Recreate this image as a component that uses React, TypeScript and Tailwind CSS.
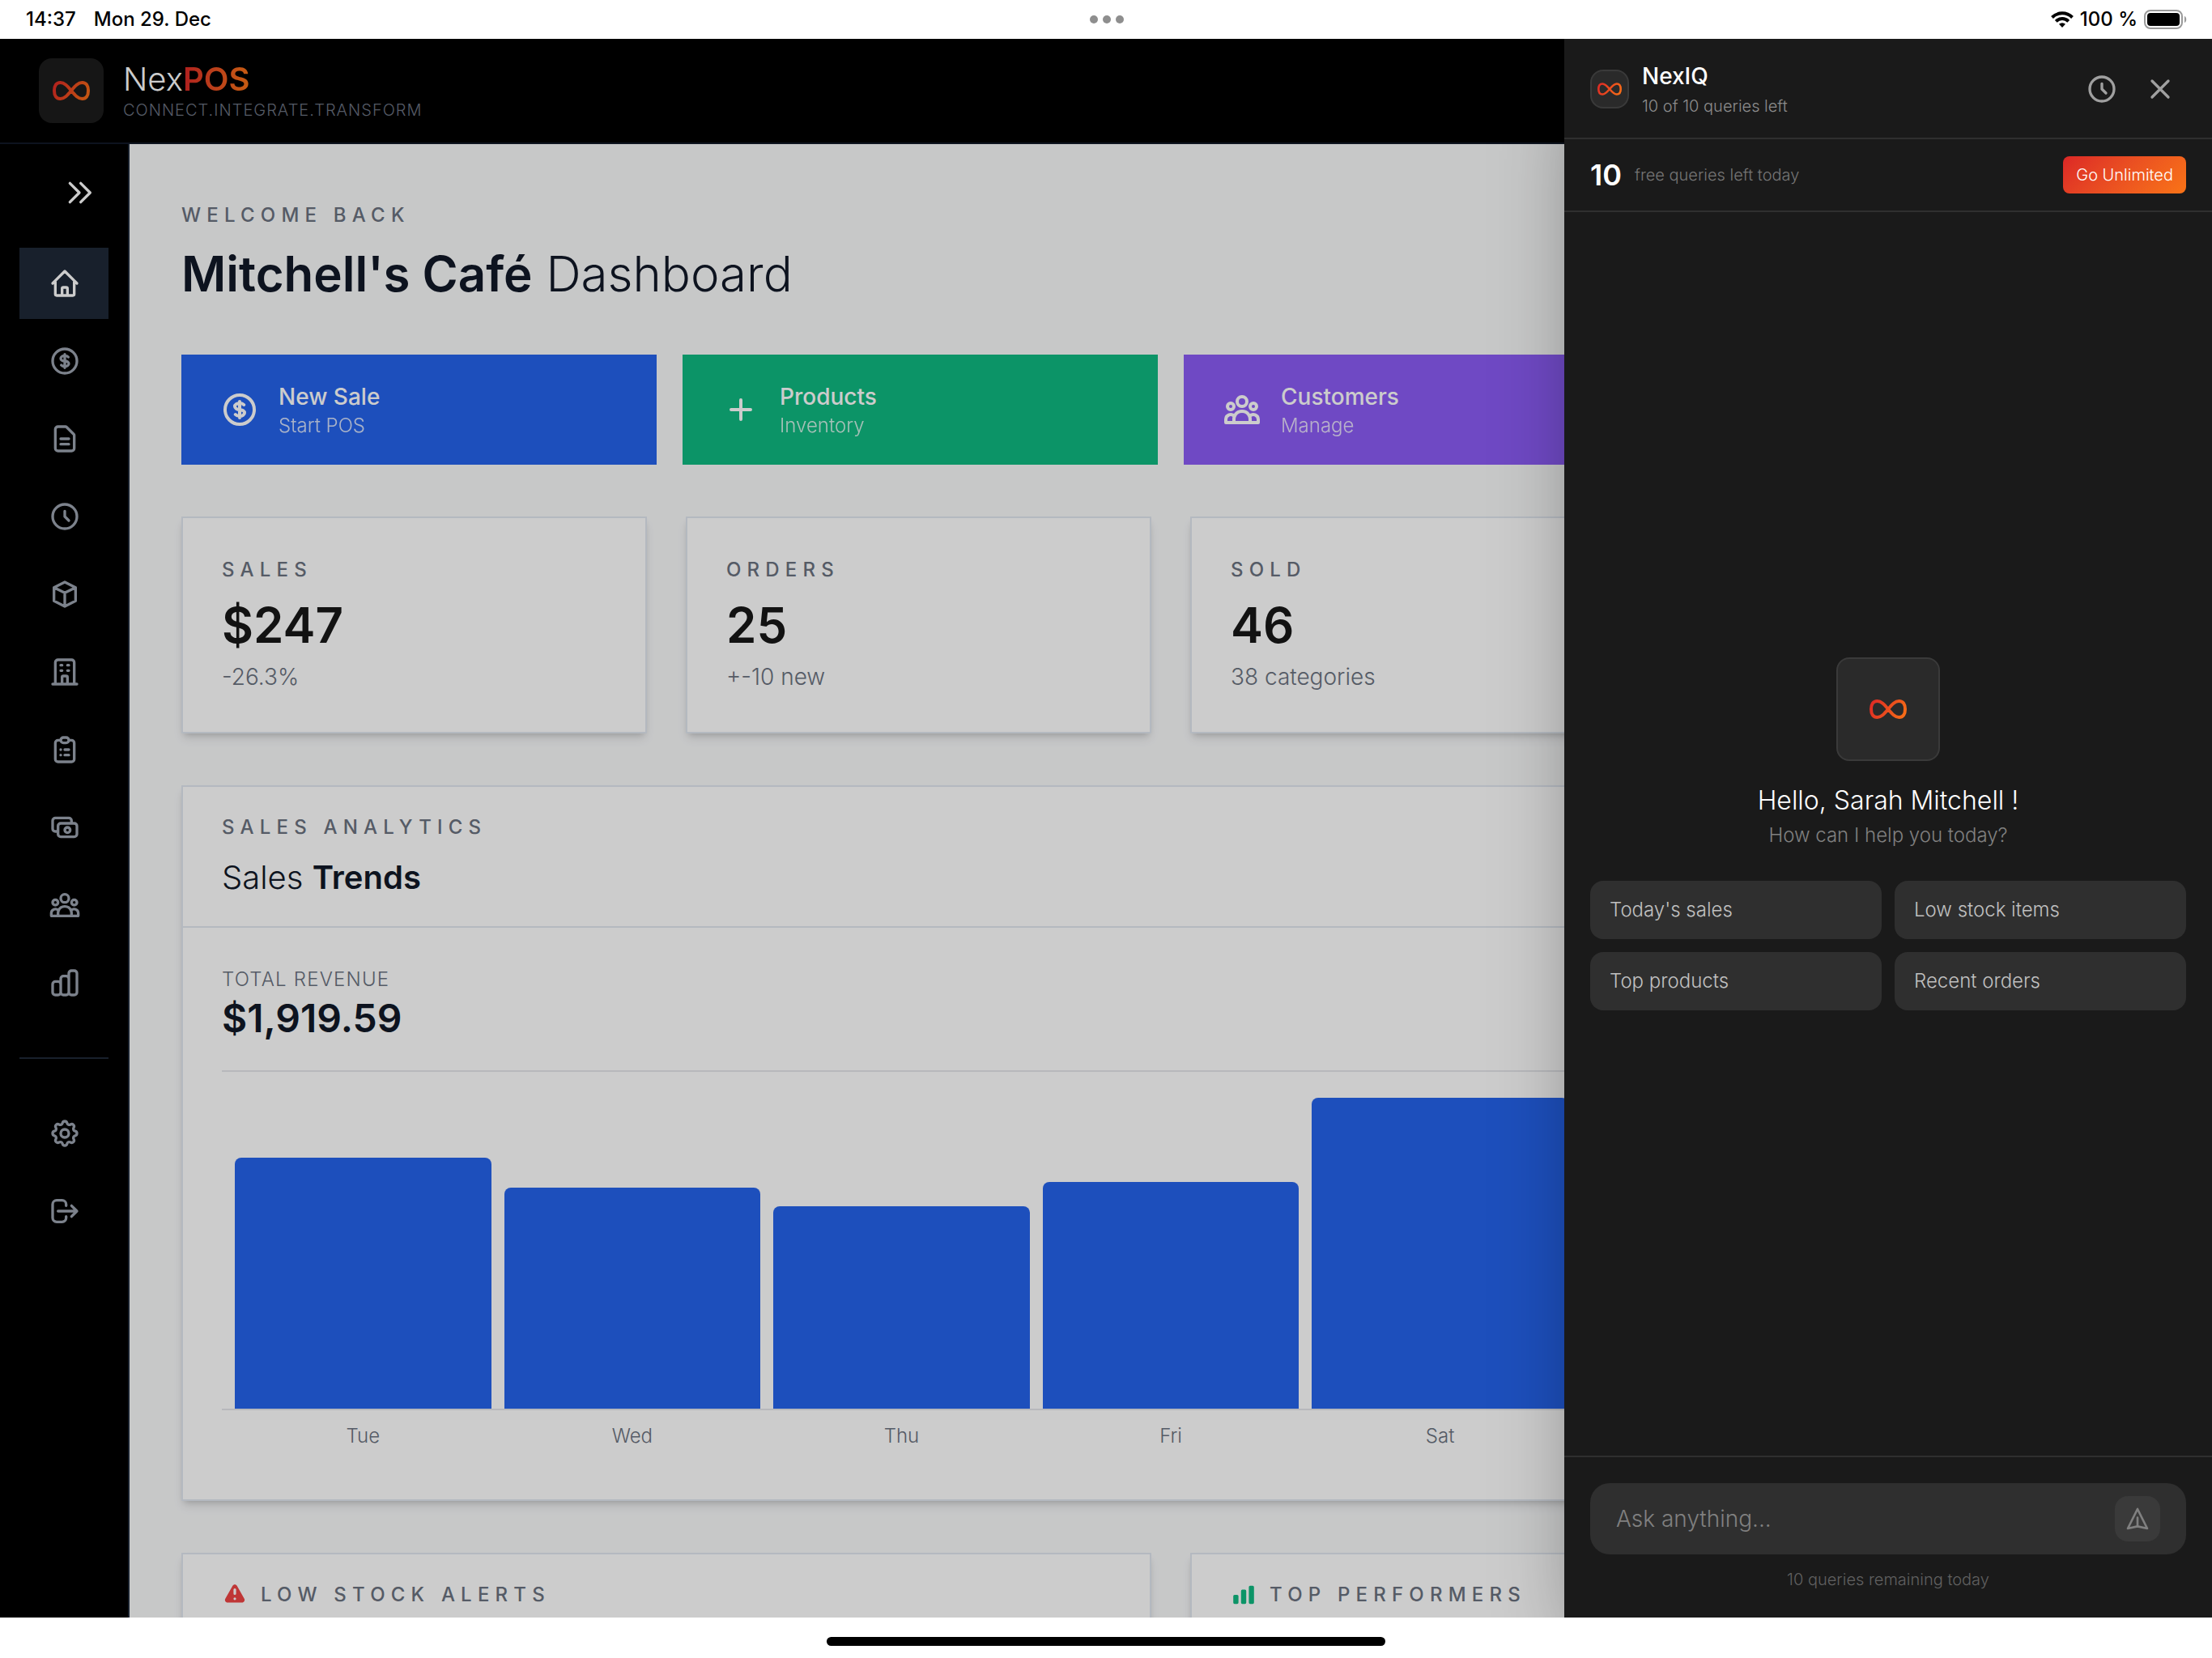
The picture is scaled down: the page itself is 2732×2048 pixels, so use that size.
import type { ReactNode } from "react";
import type { IconType } from "react-icons";
import {
  HiChartBar,
  HiExclamation,
  HiOutlineCash,
  HiOutlineChartBar,
  HiOutlineChevronDoubleRight,
  HiOutlineClipboardList,
  HiOutlineClock,
  HiOutlineCog,
  HiOutlineCube,
  HiOutlineCurrencyDollar,
  HiOutlineDocumentText,
  HiOutlineHome,
  HiOutlineLogout,
  HiOutlineOfficeBuilding,
  HiOutlinePlusSm,
  HiOutlineUserGroup,
  HiOutlineX,
} from "react-icons/hi";

type NavItem = {
  label: string;
  icon: IconType;
  active?: boolean;
};

const navItems: NavItem[] = [
  { label: "Dashboard", icon: HiOutlineHome, active: true },
  { label: "Point of sale", icon: HiOutlineCurrencyDollar },
  { label: "Invoices", icon: HiOutlineDocumentText },
  { label: "History", icon: HiOutlineClock },
  { label: "Products", icon: HiOutlineCube },
  { label: "Suppliers", icon: HiOutlineOfficeBuilding },
  { label: "Orders", icon: HiOutlineClipboardList },
  { label: "Payments", icon: HiOutlineCash },
  { label: "Customers", icon: HiOutlineUserGroup },
  { label: "Reports", icon: HiOutlineChartBar },
];

const accountItems: NavItem[] = [
  { label: "Settings", icon: HiOutlineCog },
  { label: "Log out", icon: HiOutlineLogout },
];

const actions = [
  { title: "New Sale", subtitle: "Start POS", icon: HiOutlineCurrencyDollar, color: "bg-[#2563eb]" },
  { title: "Products", subtitle: "Inventory", icon: HiOutlinePlusSm, color: "bg-[#10b981]" },
  { title: "Customers", subtitle: "Manage", icon: HiOutlineUserGroup, color: "bg-[#8b5cf6]" },
  { title: "Reports", subtitle: "Analytics", icon: HiOutlineChartBar, color: "bg-[#f97316]" },
];

const stats = [
  { label: "Sales", value: "$247", note: "-26.3%" },
  { label: "Orders", value: "25", note: "+-10 new" },
  { label: "Sold", value: "46", note: "38 categories" },
  { label: "Customers", value: "12", note: "active" },
];

const MAX_REVENUE = 384;

const revenue = [
  { day: "Tue", amount: 310 },
  { day: "Wed", amount: 273 },
  { day: "Thu", amount: 250 },
  { day: "Fri", amount: 280 },
  { day: "Sat", amount: 384 },
  { day: "Sun", amount: 290 },
  { day: "Mon", amount: 247 },
];

const suggestions = ["Today's sales", "Low stock items", "Top products", "Recent orders"];

const InfinityLogo = ({ id, className }: { id: string; className: string }) => (
  <svg viewBox="0 0 46 24" fill="none" className={className} aria-hidden="true">
    <defs>
      <linearGradient id={id} x1="0" y1="0" x2="46" y2="24" gradientUnits="userSpaceOnUse">
        <stop offset="0" stopColor="#dc2626" />
        <stop offset="1" stopColor="#f97316" />
      </linearGradient>
    </defs>
    <path
      d="M23 12C18 6 14.500 2 9.500 2C4.500 2 2 6 2 12C2 18 4.500 22 9.500 22C14.500 22 18 18 23 12C28 6 31.500 2 36.500 2C41.500 2 44 6 44 12C44 18 41.500 22 36.500 22C31.500 22 28 18 23 12Z"
      stroke={`url(#${id})`}
      strokeWidth="4"
      strokeLinejoin="round"
    />
  </svg>
);

const StatusBar = () => (
  <div className="grid h-12 shrink-0 grid-cols-3 items-center bg-white pr-[30px] pl-8 text-[24px] leading-8 font-medium text-black">
    <div className="flex gap-[22px]">
      <span>14:37</span>
      <span>Mon 29. Dec</span>
    </div>
    <div className="flex justify-center gap-[6px]">
      <span className="size-[10px] rounded-full bg-[#8e8e8e]" />
      <span className="size-[10px] rounded-full bg-[#8e8e8e]" />
      <span className="size-[10px] rounded-full bg-[#8e8e8e]" />
    </div>
    <div className="flex items-center justify-end gap-2">
      <svg viewBox="0 0 28 20" className="h-5 w-7" fill="none" stroke="#000" strokeWidth="4" aria-hidden="true">
        <path d="M1.500 7.500a17.700 17.700 0 0 1 25 0" />
        <path d="M6.300 12.300a10.900 10.900 0 0 1 15.400 0" />
        <path d="M14 20l-4-4.200a5.700 5.700 0 0 1 8 0z" fill="#000" stroke="none" />
      </svg>
      <span>100 %</span>
      <svg viewBox="0 0 54 24" className="h-6 w-[54px]" aria-hidden="true">
        <rect x="1" y="1" width="46" height="22" rx="7" fill="none" stroke="#9a9a9a" strokeWidth="2" />
        <rect x="4" y="4" width="40" height="16" rx="4" fill="#000" />
        <path d="M50 8c3 1 3 7 0 8z" fill="#9a9a9a" />
      </svg>
    </div>
  </div>
);

const Header = () => (
  <header className="flex h-[130px] shrink-0 items-center gap-6 border-b-2 border-[#111827] bg-black px-12">
    <div className="flex size-20 items-center justify-center rounded-2xl bg-[#1c1c1c]">
      <InfinityLogo id="brand-header" className="h-6 w-[46px]" />
    </div>
    <div className="pt-1">
      <p className="text-[40px] leading-[44px] font-light text-white">
        Nex
        <span className="bg-gradient-to-r from-[#dc2626] to-[#f97316] bg-clip-text font-semibold text-transparent">POS</span>
      </p>
      <p className="text-[20px] leading-8 font-light tracking-[0.05em] text-[#6b7280]">CONNECT.INTEGRATE.TRANSFORM</p>
    </div>
  </header>
);

const NavButton = ({ label, icon: Icon, active }: NavItem) => (
  <button
    type="button"
    aria-label={label}
    className={
      active
        ? "flex h-[88px] w-full items-center justify-center bg-[#1f2937] pl-[2px] text-white"
        : "flex h-[88px] w-full items-center justify-center pl-[2px] text-[#9ca3af]"
    }
  >
    <Icon className="size-10" />
  </button>
);

const Sidebar = () => (
  <aside className="flex w-40 shrink-0 flex-col border-r-2 border-[#1f2937] bg-black px-6 py-6">
    <button type="button" aria-label="Expand menu" className="self-end p-4 text-white">
      <HiOutlineChevronDoubleRight className="size-10" />
    </button>
    <nav className="mt-8 flex flex-col gap-2 border-b-2 border-[#1f2937] pb-12">
      {navItems.map((item) => (
        <NavButton key={item.label} {...item} />
      ))}
    </nav>
    <div className="mt-12 flex flex-col gap-2">
      {accountItems.map((item) => (
        <NavButton key={item.label} {...item} />
      ))}
    </div>
  </aside>
);

const Eyebrow = ({ children }: { children: ReactNode }) => (
  <p className="text-[24px] leading-8 font-medium tracking-[0.3em] text-[#6b7280] uppercase">{children}</p>
);

const Card = ({ children, className = "" }: { children: ReactNode; className?: string }) => (
  <section
    className={`border-2 border-[#e2e8f0] bg-white shadow-[0_8px_12px_-2px_rgba(0,0,0,0.1),0_4px_8px_-4px_rgba(0,0,0,0.2)] ${className}`}
  >
    {children}
  </section>
);

const SalesChart = () => (
  <Card>
    <div className="border-b-2 border-[#e2e8f0] px-12 pt-[34px] pb-8">
      <Eyebrow>Sales Analytics</Eyebrow>
      <h2 className="mt-[18px] text-[40px] leading-[56px] font-light text-[#111827]">
        Sales <span className="font-semibold">Trends</span>
      </h2>
    </div>
    <div className="px-12 pt-12 pb-[62px]">
      <div className="border-b-2 border-[#e5e7eb] pb-8">
        <p className="text-[24px] leading-8 font-light tracking-[0.05em] text-[#6b7280]">TOTAL REVENUE</p>
        <p className="text-[48px] leading-[64px] font-semibold text-[#111827]">$1,919.59</p>
      </div>
      <div className="mt-8 flex h-[386px] items-end gap-4 border-b-2 border-[#e5e7eb] px-4">
        {revenue.map(({ day, amount }) => (
          <div
            key={day}
            className="flex-1 rounded-t-lg bg-[#2563eb]"
            style={{ height: `${(amount / MAX_REVENUE) * 100}%` }}
          />
        ))}
      </div>
      <div className="mt-4 flex gap-4 px-4 text-center text-[24px] leading-8 font-light text-[#6b7280]">
        {revenue.map(({ day }) => (
          <span key={day} className="flex-1">
            {day}
          </span>
        ))}
      </div>
    </div>
  </Card>
);

const Dashboard = () => (
  <main className="min-w-0 flex-1 overflow-hidden bg-[#f9fafb] px-16 pt-[72px]">
    <Eyebrow>Welcome back</Eyebrow>
    <h1 className="mt-4 text-[60px] leading-[80px] font-light text-[#111827]">
      <span className="font-semibold">Mitchell's Café</span> Dashboard
    </h1>

    <div className="mt-[60px] grid grid-cols-4 gap-8">
      {actions.map(({ title, subtitle, icon: Icon, color }) => (
        <button key={title} type="button" className={`flex items-center gap-6 px-12 py-8 text-left text-white ${color}`}>
          <Icon className="size-12" />
          <span className="flex flex-col">
            <span className="text-[28px] leading-10 font-medium">{title}</span>
            <span className="text-[24px] leading-8 font-light opacity-80">{subtitle}</span>
          </span>
        </button>
      ))}
    </div>

    <div className="mt-16 grid grid-cols-4 gap-12">
      {stats.map(({ label, value, note }) => (
        <Card key={label} className="p-12">
          <Eyebrow>{label}</Eyebrow>
          <p className="mt-4 text-[60px] leading-[72px] font-semibold text-[#171717]">{value}</p>
          <p className="mt-2 text-[28px] leading-10 font-light text-[#6b7280]">{note}</p>
        </Card>
      ))}
    </div>

    <div className="mt-16">
      <SalesChart />
    </div>

    <div className="mt-16 grid grid-cols-2 gap-12">
      <Card className="flex h-96 items-start gap-4 px-12 py-[34px]">
        <HiExclamation className="size-8 text-[#ef4444]" />
        <Eyebrow>Low stock alerts</Eyebrow>
      </Card>
      <Card className="flex h-96 items-start gap-4 px-12 py-[34px]">
        <HiChartBar className="size-8 text-[#10b981]" />
        <Eyebrow>Top performers</Eyebrow>
      </Card>
    </div>
  </main>
);

const AssistantPanel = () => (
  <aside className="absolute inset-y-0 right-0 flex w-[800px] flex-col bg-[#1a1a1a] shadow-[0_50px_100px_-24px_rgba(0,0,0,0.4)]">
    <div className="flex items-center gap-4 border-b-2 border-[#2f2f2f] px-8 pt-[25px] pb-[23px]">
      <div className="flex size-12 items-center justify-center rounded-2xl border-2 border-[#3a3a3a] bg-[#2a2a2a]">
        <InfinityLogo id="brand-panel" className="h-4 w-[30px]" />
      </div>
      <div className="flex-1">
        <h2 className="text-[28px] leading-[42px] font-medium text-white">NexIQ</h2>
        <p className="text-[20px] leading-8 font-light text-[#8c8c8c]">10 of 10 queries left</p>
      </div>
      <div className="flex gap-2 text-[#a0a0a0]">
        <button type="button" aria-label="History" className="p-3">
          <HiOutlineClock className="size-10" />
        </button>
        <button type="button" aria-label="Close" className="p-3">
          <HiOutlineX className="size-10" />
        </button>
      </div>
    </div>

    <div className="flex items-center gap-4 border-b-2 border-[#2f2f2f] px-8 py-5">
      <span className="text-[36px] leading-[48px] font-semibold text-white">10</span>
      <span className="flex-1 text-[20px] leading-[30px] font-light text-[#757575]">free queries left today</span>
      <button
        type="button"
        className="rounded-lg bg-linear-135 from-[#dc2626] to-[#f97316] px-4 py-2 text-[20px] leading-[30px] font-light text-white"
      >
        Go Unlimited
      </button>
    </div>

    <div className="flex flex-1 flex-col items-center justify-center px-8">
      <div className="flex size-32 items-center justify-center rounded-2xl border-2 border-[#3a3a3a] bg-[#2a2a2a]">
        <InfinityLogo id="brand-hero" className="h-6 w-[46px]" />
      </div>
      <p className="mt-6 text-[32px] leading-[50px] font-light text-white">Hello, Sarah Mitchell !</p>
      <p className="text-[24px] leading-9 font-light text-[#808080]">How can I help you today?</p>
      <div className="mt-[38px] grid w-full grid-cols-2 gap-4">
        {suggestions.map((suggestion) => (
          <button
            key={suggestion}
            type="button"
            className="h-[72px] rounded-2xl bg-[#2f2f2f] px-6 text-left text-[24px] leading-9 font-light text-[#c0c0c0]"
          >
            {suggestion}
          </button>
        ))}
      </div>
    </div>

    <form className="border-t-2 border-[#2f2f2f] px-8 py-8">
      <div className="flex h-[88px] items-center rounded-3xl bg-[#2f2f2f] px-8">
        <input
          type="text"
          aria-label="Ask anything"
          placeholder="Ask anything..."
          className="min-w-0 flex-1 bg-transparent text-[28px] leading-[42px] font-light text-white outline-none placeholder:text-[#808080]"
        />
        <button
          type="submit"
          aria-label="Send"
          className="flex size-14 items-center justify-center rounded-2xl bg-[#3a3a3a] text-[#808080]"
        >
          <svg viewBox="0 0 24 24" fill="none" stroke="currentColor" strokeWidth="2" strokeLinecap="round" strokeLinejoin="round" className="size-8" aria-hidden="true">
            <path d="M12 19l9 2-9-18-9 18 9-2zm0 0v-8" />
          </svg>
        </button>
      </div>
      <p className="mt-4 text-center text-[20px] leading-[30px] font-light text-[#606060]">10 queries remaining today</p>
    </form>
  </aside>
);

const App = () => {
  return (
    <div className="flex h-screen flex-col overflow-hidden bg-white font-['Inter',sans-serif]">
      <StatusBar />
      <div className="relative flex min-h-0 flex-1 flex-col overflow-hidden">
        <Header />
        <div className="flex min-h-0 flex-1">
          <Sidebar />
          <Dashboard />
        </div>
        <div className="absolute inset-0 bg-black/20" />
        <AssistantPanel />
      </div>
      <div className="flex h-[50px] shrink-0 items-center justify-center bg-white pt-2">
        <div className="h-[11px] w-[690px] rounded-full bg-black" />
      </div>
    </div>
  );
};

export default App;
